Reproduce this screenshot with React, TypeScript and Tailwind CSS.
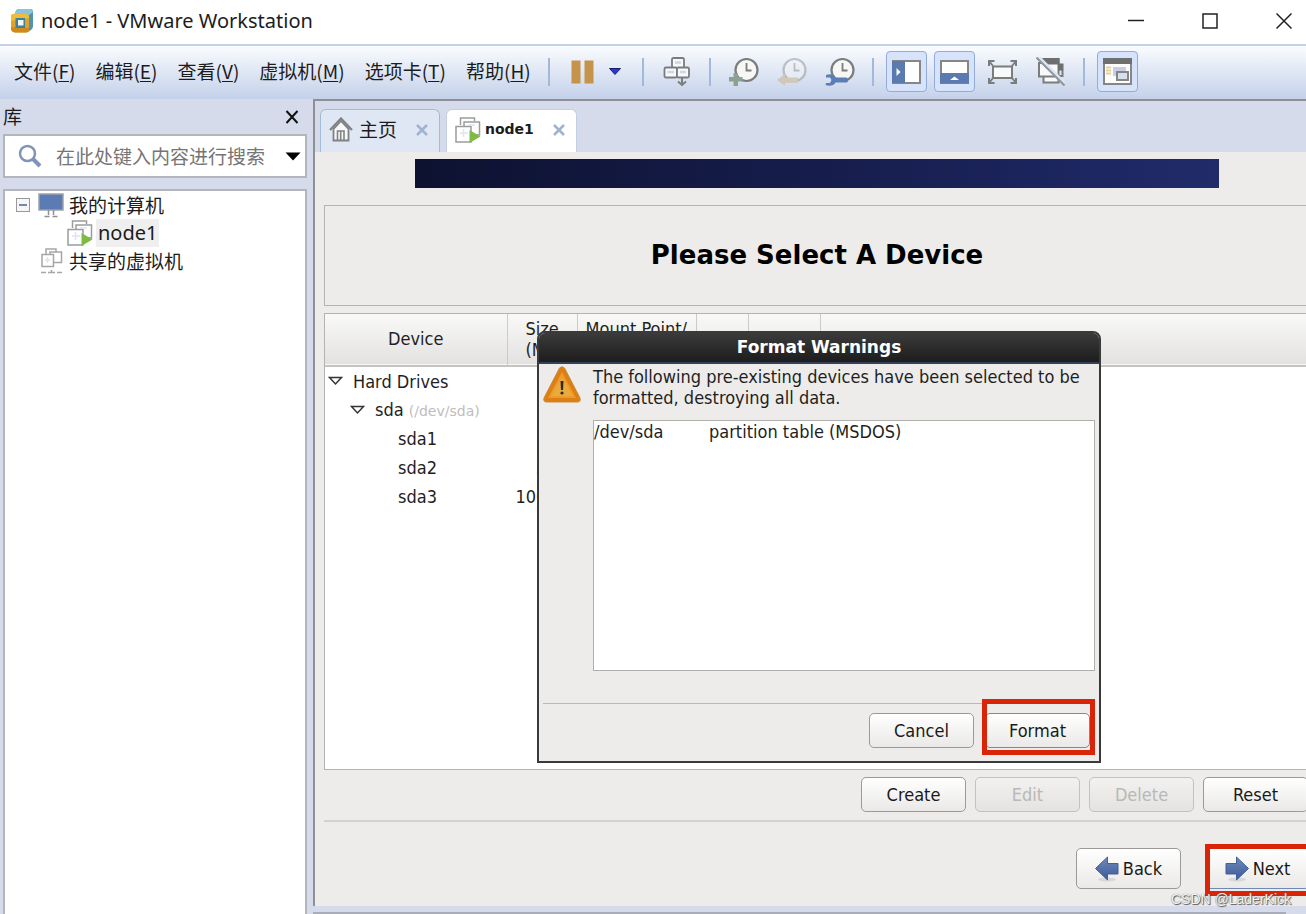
import { useState } from 'react';
import type { ReactNode } from 'react';

const MENUS = [
  { label: '文件', hotkey: 'F' },
  { label: '编辑', hotkey: 'E' },
  { label: '查看', hotkey: 'V' },
  { label: '虚拟机', hotkey: 'M' },
  { label: '选项卡', hotkey: 'T' },
  { label: '帮助', hotkey: 'H' },
];

const PARTITIONS = [
  { name: 'sda1', size: '' },
  { name: 'sda2', size: '200' },
  { name: 'sda3', size: '10000' },
];

function LogoIcon() {
  return (
    <svg width="24" height="26" viewBox="0 0 24 26" aria-hidden="true">
      <path d="M6 2.5 Q7 1 9 1 H20 Q23 1 23 4 V18 Q23 20 21.500 21.500 L18 24 L5 8 Z" fill="#4d93b4" />
      <path d="M6 2.500 Q7 1 9 1 H20 Q23 1 23 4 L19 7 H4 Z" fill="#8cc3dc" />
      <path d="M1 9 Q1 6 4 6 H16 Q19 6 19 9 V21 Q19 24.500 16 24.500 H5 Q1 24 1 20.500 Z" fill="#e0a326" />
      <path d="M1 9 Q1 6 4 6 H16 Q19 6 19 9 V10 L1 13 Z" fill="#efbd36" />
      <path d="M1 19 L19 20 V21 Q19 24.500 16 24.500 H5 Q1 24 1 20.500 Z" fill="#d08a1c" />
      <path d="M5.500 10 H15 V20 H5.500 Z" fill="#3d7f9e" />
      <path d="M8 12 H13.500 V17.500 H8 Z" fill="#f4f6f8" />
    </svg>
  );
}

function ClockFace({ faded }: { faded?: boolean }) {
  return (
    <g opacity={faded ? 0.4 : 1}>
      <circle cx="18.500" cy="13" r="11" fill="#f7f7f6" stroke="#7b7c7c" strokeWidth="2.2" />
      <path d="M18.500 6 V13.500 H23.500" fill="none" stroke="#7b7c7c" strokeWidth="1.8" />
    </g>
  );
}

function SnapshotIcon({ kind }: { kind: 'take' | 'revert' | 'manage' }) {
  return (
    <svg width="31" height="30" viewBox="0 0 31 30" aria-hidden="true">
      <ClockFace faded={kind === 'revert'} />
      {kind === 'take' && (
        <path d="M5.500 16 H10 V20 H14.500 V24.500 H10 V29 H5.500 V24.500 H1 V20 H5.500 Z" fill="#8ba293" />
      )}
      {kind === 'revert' && <path d="M1 23 L9 17 V20.500 H22 V26 H9 V29 Z" fill="#cfc8bb" />}
      {kind === 'manage' && (
        <path
          d="M2 18 C6 16.500 10 17 11.500 20.500 H22.500 Q24 20.500 24 23 Q24 25.500 22.500 25.500 H11.500 C10 29 5 29.500 1.500 28 L2 26 H6 L7.500 23 L6 20.500 H2 Z"
          fill="#5b7fb4"
        />
      )}
    </svg>
  );
}

function SendKeysIcon() {
  return (
    <svg width="28" height="30" viewBox="0 0 28 30" aria-hidden="true">
      <g fill="#f8f9fb" stroke="#7b7c7c" strokeWidth="1.800">
        <rect x="9" y="1" width="12" height="10" rx="1.500" />
        <rect x="1.500" y="10.500" width="12.500" height="10" rx="1.500" />
        <rect x="14" y="10.500" width="12" height="10" rx="1.500" />
      </g>
      <path d="M12 5.500 H18 M4.500 15 H11 M17 15 H23" stroke="#cdd6e8" strokeWidth="2.500" />
      <path d="M19 21 V28 M15 24.500 L19 28 L23 24.500" fill="none" stroke="#7b7c7c" strokeWidth="2" />
    </svg>
  );
}

function SidebarIcon() {
  return (
    <svg width="29" height="24" viewBox="0 0 29 24" aria-hidden="true">
      <rect x="1" y="1" width="27" height="22" fill="#fff" stroke="#858686" strokeWidth="2" />
      <rect x="0" y="1" width="13" height="22" fill="#5b7bb0" />
      <path d="M4.500 8 L8.500 12 L4.500 16 Z" fill="#fff" />
    </svg>
  );
}

function ThumbnailBarIcon() {
  return (
    <svg width="29" height="24" viewBox="0 0 29 24" aria-hidden="true">
      <rect x="1" y="1" width="27" height="22" fill="#fff" stroke="#858686" strokeWidth="2" />
      <rect x="0" y="13" width="29" height="10.500" fill="#5b7bb0" />
      <path d="M10 20 L14.500 16.500 L19 20 Z" fill="#fff" />
    </svg>
  );
}

function FullScreenIcon() {
  return (
    <svg width="29" height="24" viewBox="0 0 29 24" aria-hidden="true">
      <rect x="5" y="6.500" width="19" height="11.500" fill="#f8f9fb" stroke="#7b7c7c" strokeWidth="2" />
      <path
        d="M1 6 V1 H6.500 M22.500 1 H28 V6 M28 18 V23 H22.500 M6.500 23 H1 V18 M1 1 L5 6 M28 1 L24 6 M28 23 L24 18 M1 23 L5 18"
        fill="none"
        stroke="#7b7c7c"
        strokeWidth="2"
      />
    </svg>
  );
}

function UnityIcon() {
  return (
    <svg width="29" height="29" viewBox="0 0 29 29" aria-hidden="true">
      <rect x="7.500" y="2" width="15" height="23.500" fill="#f8f9fb" stroke="#7b7c7c" strokeWidth="2" />
      <rect x="6.500" y="1" width="17" height="6.500" fill="#6e6f6f" />
      <rect x="22" y="6.500" width="5.500" height="7" fill="#6e6f6f" />
      <path d="M26.500 13 V19 H20" fill="none" stroke="#7b7c7c" strokeWidth="2" />
      <path d="M3 6 H8 L21 19.500 H3 Z" fill="#f8f9fb" stroke="#7b7c7c" strokeWidth="2" />
      <path d="M2 0 L29 27" stroke="#dde5f3" strokeWidth="4" />
      <path d="M0.500 0.500 L28.500 28.500" stroke="#8f959d" strokeWidth="2" />
    </svg>
  );
}

function ConsoleViewIcon() {
  return (
    <svg width="29" height="27" viewBox="0 0 29 27" aria-hidden="true">
      <rect x="1" y="1" width="27" height="25" fill="#fdfdfc" stroke="#858686" strokeWidth="2" />
      <rect x="0" y="0" width="29" height="6" fill="#6e6f6f" />
      <path d="M3 9.500 H8 M3 12.500 H8 M3 15.500 H8" stroke="#e4cf9a" strokeWidth="2" />
      <rect x="10" y="9" width="13" height="9" fill="#c5d0e6" />
      <rect x="14" y="14" width="11" height="8" fill="#d7deec" stroke="#858686" strokeWidth="2" />
    </svg>
  );
}

function VmIcon() {
  return (
    <svg className="shrink-0" width="26" height="26" viewBox="0 0 26 26" aria-hidden="true">
      <g fill="#fff" stroke="#9b9c9c" strokeWidth="1.500">
        <path d="M5.500 8 V1 H19.500 V4" fill="none" />
        <rect x="9" y="5" width="15.500" height="13" />
        <rect x="1" y="9.500" width="15" height="15.500" />
      </g>
      <path d="M8.500 12 V20 M5 16 H13 M13 8 H20" stroke="#dfe4f1" strokeWidth="1.500" />
      <path d="M14.500 13 L25.500 19.500 L14.500 26 Z" fill="#7dbb42" />
    </svg>
  );
}

function MonitorIcon() {
  return (
    <svg width="26" height="25" viewBox="0 0 26 25" aria-hidden="true">
      <rect x="1" y="1" width="24" height="16" fill="#5b7bb4" stroke="#9da1a8" strokeWidth="1.500" />
      <path d="M10.500 17 V22 M15.500 17 V22 M6.500 23.500 H11.500 M14.500 23.500 H19.500" stroke="#8f9193" strokeWidth="1.500" />
    </svg>
  );
}

function SharedIcon() {
  return (
    <svg width="22" height="26" viewBox="0 0 22 26" aria-hidden="true">
      <g fill="#fff" stroke="#a5a6a6" strokeWidth="1.500">
        <path d="M5 6 V1 H15 V4" fill="none" />
        <rect x="9" y="4" width="11.500" height="10.500" />
        <rect x="1" y="6.500" width="11.500" height="12" />
      </g>
      <path d="M6.500 9 V15 M4 12 H9.500" stroke="#dfe4f1" strokeWidth="1.500" />
      <path d="M10.500 22 V24.500 M0 24.500 H5 M7 24.500 H14 M16 24.500 H21" stroke="#a5a6a6" strokeWidth="1.500" />
    </svg>
  );
}

function HomeIcon() {
  return (
    <svg width="24" height="25" viewBox="0 0 24 25" aria-hidden="true">
      <path d="M4.500 12 V23.500 H19.500 V12 L12 4 Z" fill="#f7f8f9" stroke="#808182" strokeWidth="1.800" />
      <path d="M1 13 L12 1.500 L23 13" fill="none" stroke="#808182" strokeWidth="2.200" />
      <path d="M8.500 23 V14 H15 V23 M11.700 14 V23" fill="none" stroke="#808182" strokeWidth="1.600" />
    </svg>
  );
}

function WarningIcon() {
  return (
    <svg className="shrink-0" width="38" height="37" viewBox="0 0 38 37" aria-hidden="true">
      <path
        d="M16.500 2 Q19 -0.500 21.500 2 L37 32 Q38 36 34.500 36 H3.500 Q0 36 1 32 Z"
        fill="#dd7f12"
        stroke="#c9883a"
      />
      <path d="M19 6 L33 32 H5 Z" fill="#ee9a2c" />
      <path d="M19 11 L30 30 H8 Z" fill="#e8ab3c" />
      <path d="M17.500 15 H20.500 L20 24 H18 Z" fill="#33291a" />
      <circle cx="19" cy="27" r="1.600" fill="#33291a" />
    </svg>
  );
}

function ArrowIcon({ flip }: { flip?: boolean }) {
  return (
    <svg width="24" height="26" viewBox="0 0 24 26" aria-hidden="true">
      <defs>
        <linearGradient id="arrow" x1="0" y1="0" x2="0" y2="1">
          <stop offset="0" stopColor="#7189bb" />
          <stop offset="1" stopColor="#3b5998" />
        </linearGradient>
      </defs>
      <ellipse cx="12" cy="23.500" rx="9" ry="2" fill="#d8d8d8" />
      <path
        d="M1 7.500 H11.500 V1 L23.500 12.500 L11.500 24 V18 H1 Z"
        fill="url(#arrow)"
        stroke="#3f5f9f"
        transform={flip ? 'translate(24 0) scale(-1 1)' : undefined}
      />
    </svg>
  );
}

function Expander() {
  return (
    <svg className="shrink-0" width="15" height="10" viewBox="0 0 15 10" aria-hidden="true">
      <path d="M1.500 1.500 H13.500 L7.500 8 Z" fill="#fff" stroke="#333" strokeWidth="1.500" />
    </svg>
  );
}

function CrossIcon() {
  return (
    <svg width="12" height="12" viewBox="0 0 12 12" aria-hidden="true">
      <path d="M1 1 L11 11 M11 1 L1 11" stroke="#9fb3cf" strokeWidth="2.500" />
    </svg>
  );
}

function Divider() {
  return <span className="mx-3 h-7 w-0.5 shrink-0 bg-[#a3b9dc]" />;
}

function ToolButton({ label, active, children }: { label: string; active?: boolean; children: ReactNode }) {
  return (
    <button
      type="button"
      aria-label={label}
      aria-pressed={active}
      className={`flex size-[41px] shrink-0 items-center justify-center rounded-[4px] ${
        active ? 'border border-[#92abd8] bg-[#d6e3fa]' : ''
      }`}
    >
      {children}
    </button>
  );
}

function GtkButton({ children, disabled, focused }: { children: ReactNode; disabled?: boolean; focused?: boolean }) {
  const tone = disabled
    ? 'border-[#c3c2c0] bg-linear-to-b from-[#f2f1f0] to-[#e4e3e1] text-[#b9b8b6]'
    : focused
      ? 'border-[#7089b8] bg-linear-to-b from-white to-[#eae9e7] text-[#1a1a1a]'
      : 'border-[#9b9a98] bg-linear-to-b from-white to-[#eae9e7] text-[#1a1a1a]';
  return (
    <button
      type="button"
      disabled={disabled}
      className={`flex h-full w-[105px] items-center justify-center gap-1 rounded-[5px] border ${tone}`}
    >
      {children}
    </button>
  );
}

function TitleBar() {
  return (
    <header className="flex h-11 shrink-0 items-center bg-white pr-3.5 pb-0.5 pl-2.5">
      <LogoIcon />
      <h1 className="ml-[7px] flex-1 font-['Noto_Sans'] text-[20px] text-[#1c1c1c]">node1 - VMware Workstation</h1>
      <div className="flex gap-[58px]">
        <button type="button" aria-label="最小化" className="size-4">
          <svg width="16" height="16" viewBox="0 0 16 16"><path d="M0 7.500 H16" stroke="#222" strokeWidth="1.500" /></svg>
        </button>
        <button type="button" aria-label="最大化" className="size-4">
          <svg width="16" height="16" viewBox="0 0 16 16"><rect x="1" y="1" width="14" height="14" fill="none" stroke="#222" strokeWidth="1.500" /></svg>
        </button>
        <button type="button" aria-label="关闭" className="size-4">
          <svg width="16" height="16" viewBox="0 0 16 16"><path d="M0.500 0.500 L15.500 15.500 M15.500 0.500 L0.500 15.500" stroke="#222" strokeWidth="1.500" /></svg>
        </button>
      </div>
    </header>
  );
}

function Toolbar() {
  return (
    <div className="flex h-[55px] shrink-0 items-center border-t-2 border-[#c3d2e8] bg-linear-to-b from-[#fafcfe] to-[#c4d1ea] pb-0.5">
      <nav className="flex w-[536px] shrink-0 gap-5 pl-3.5 text-[19px] text-[#1c1c1c]">
        {MENUS.map((menu) => (
          <button key={menu.hotkey} type="button" className="whitespace-nowrap">
            {menu.label}(<span className="underline underline-offset-2">{menu.hotkey}</span>)
          </button>
        ))}
      </nav>
      <Divider />
      <ToolButton label="挂起">
        <svg width="24" height="24" viewBox="0 0 24 24"><path d="M0.500 0.500 H9.500 V23.500 H0.500 Z M13.500 0.500 H22.500 V23.500 H13.500 Z" fill="#c6934a" /></svg>
      </ToolButton>
      <button type="button" aria-label="电源选项" className="flex h-10 w-[27px] shrink-0 items-center pl-1.5">
        <svg width="12" height="7" viewBox="0 0 12 7"><path d="M0.500 0.500 H11.500 L6 6.500 Z" fill="#2a35d8" stroke="#18206e" /></svg>
      </button>
      <Divider />
      <ToolButton label="发送 Ctrl+Alt+Del"><SendKeysIcon /></ToolButton>
      <Divider />
      <div className="flex gap-[7px]">
        <ToolButton label="拍摄快照"><SnapshotIcon kind="take" /></ToolButton>
        <ToolButton label="恢复快照"><SnapshotIcon kind="revert" /></ToolButton>
        <ToolButton label="管理快照"><SnapshotIcon kind="manage" /></ToolButton>
      </div>
      <Divider />
      <div className="flex gap-[7px]">
        <ToolButton label="显示库" active><SidebarIcon /></ToolButton>
        <ToolButton label="显示缩略图" active><ThumbnailBarIcon /></ToolButton>
        <ToolButton label="全屏"><FullScreenIcon /></ToolButton>
        <ToolButton label="Unity"><UnityIcon /></ToolButton>
      </div>
      <Divider />
      <ToolButton label="控制台视图" active><ConsoleViewIcon /></ToolButton>
    </div>
  );
}

function Library() {
  const [query, setQuery] = useState('');
  return (
    <aside className="flex w-[313px] shrink-0 flex-col bg-[#d6dbec] pr-1.5 pl-[3px] text-[19px] text-[#1c1c1c]">
      <div className="flex h-[35px] items-center justify-between pr-2">
        <h2>库</h2>
        <button type="button" aria-label="关闭库">
          <svg width="14" height="14" viewBox="0 0 14 14"><path d="M1.500 1 L12.500 13 M12.500 1 L1.500 13" stroke="#111" strokeWidth="2" /></svg>
        </button>
      </div>
      <div className="flex h-11 items-center border-2 border-[#b3b5bc] bg-white pr-1 pl-[13px]">
        <svg width="24" height="24" viewBox="0 0 24 24" aria-hidden="true">
          <circle cx="9.500" cy="9.500" r="7.500" fill="none" stroke="#8093bb" strokeWidth="2.500" />
          <path d="M15 15 L22 22" stroke="#8093bb" strokeWidth="4" />
        </svg>
        <input
          type="text"
          aria-label="搜索库"
          value={query}
          onChange={(e) => setQuery(e.target.value)}
          placeholder="在此处键入内容进行搜索"
          className="ml-3.5 min-w-0 flex-1 outline-none placeholder:text-[#757575]"
        />
        <button type="button" aria-label="搜索选项">
          <svg width="16" height="9" viewBox="0 0 16 9"><path d="M0.500 0.500 H15.500 L8 8.500 Z" fill="#000" /></svg>
        </button>
      </div>
      <ul className="mt-[11px] flex-1 border-2 border-b-0 border-[#b3b5bc] bg-white leading-7">
        <li>
          <div className="flex h-7 items-center pl-[11px]">
            <button type="button" aria-label="折叠" className="mr-2">
              <svg width="14" height="14" viewBox="0 0 14 14"><rect x="0.500" y="0.500" width="13" height="13" fill="#f6f6f6" stroke="#999" /><path d="M3 7 H11" stroke="#4a5fa0" strokeWidth="1.500" /></svg>
            </button>
            <MonitorIcon />
            <span className="ml-[5px]">我的计算机</span>
          </div>
          <ul>
            <li className="flex h-7 items-center pl-[62px]">
              <VmIcon />
              <span className="ml-[3px] bg-[#efefef] px-0.5 font-['Noto_Sans'] text-[20px]">node1</span>
            </li>
          </ul>
        </li>
        <li className="flex h-7 items-center pl-9">
          <SharedIcon />
          <span className="ml-1.5">共享的虚拟机</span>
        </li>
      </ul>
    </aside>
  );
}

function Tabs() {
  return (
    <div className="flex h-[51px] shrink-0 items-end gap-1.5 bg-[#d6dbec] pl-[5px] text-[19px] text-[#1c1c1c]">
      <div className="flex h-[43px] w-[120px] items-center rounded-t-md border border-b-0 border-[#a5bad8] bg-[#dfe7f5] px-2 pb-[3px]">
        <HomeIcon />
        <button type="button" className="ml-1.5 flex-1 text-left">主页</button>
        <button type="button" aria-label="关闭主页" className="mr-[3px]"><CrossIcon /></button>
      </div>
      <div className="flex h-[43px] w-[131px] items-center rounded-t-md border border-b-0 border-[#c3cfe4] bg-white px-2 pb-[3px]">
        <VmIcon />
        <button type="button" className="ml-1 flex-1 text-left font-['DejaVu_Sans'] text-[14px] font-bold">node1</button>
        <button type="button" aria-label="关闭 node1" className="mr-[3px]"><CrossIcon /></button>
      </div>
    </div>
  );
}

function DeviceTable() {
  return (
    <table className="w-full table-fixed border-collapse">
      <colgroup>
        <col className="w-[182px]" />
        <col className="w-[70px]" />
        <col className="w-[119px]" />
        <col className="w-[52px]" />
        <col className="w-[72px]" />
        <col />
      </colgroup>
      <thead>
        <tr className="h-[52px] border-b-2 border-[#c4c3c1] bg-linear-to-b from-[#f9f9f8] to-[#e3e2e0] leading-[21px] whitespace-nowrap">
          <th className="border-r border-[#cccbc9] pb-0.5 font-normal">Device</th>
          <th className="border-r border-[#cccbc9] pb-0.5 pl-[18px] text-left font-normal">Size<br />(MB)</th>
          <th className="border-r border-[#cccbc9] pb-0.5 pl-2 text-left font-normal">Mount Point/<br />RAID</th>
          <th className="border-r border-[#cccbc9]" />
          <th className="border-r border-[#cccbc9]" />
          <th />
        </tr>
      </thead>
      <tbody>
        <tr className="h-[29px]">
          <td className="pl-[3px]">
            <span className="flex items-center gap-2.5"><Expander />Hard Drives</span>
          </td>
        </tr>
        <tr className="h-[29px]">
          <td className="pl-[25px]">
            <span className="flex items-center gap-2.5 whitespace-nowrap">
              <Expander />
              <span>sda <small className="font-['DejaVu_Sans'] text-[14px] text-[#bdbdbd]">(/dev/sda)</small></span>
            </span>
          </td>
        </tr>
        {PARTITIONS.map((part) => (
          <tr key={part.name} className="h-[29px]">
            <td className="pl-[73px]">{part.name}</td>
            <td className="pr-2.5 text-right">{part.size}</td>
          </tr>
        ))}
      </tbody>
    </table>
  );
}

function FormatDialog() {
  return (
    <div
      role="dialog"
      aria-labelledby="format-title"
      className="absolute top-[17px] left-[212px] flex h-[432px] w-[564px] flex-col rounded-t-lg border-2 border-[#3a3a3a] bg-[#edeceb]"
    >
      <h3
        id="format-title"
        className="flex h-[31px] shrink-0 items-center justify-center rounded-t-md border-b-2 border-[#35415a] bg-linear-to-b from-[#3a3b3a] to-[#1d1d1d] font-['DejaVu_Sans'] text-[17px] font-bold text-white"
      >
        Format Warnings
      </h3>
      <div className="flex flex-1 gap-3 px-1 pt-0.5">
        <WarningIcon />
        <div className="flex flex-1 flex-col">
          <p className="leading-[21px] whitespace-nowrap">
            The following pre-existing devices have been selected to be
            <br />
            formatted, destroying all data.
          </p>
          <table className="mt-3 block h-[251px] border border-[#b0afac] bg-white leading-[21px]">
            <tbody>
              <tr>
                <td className="w-[115px]">/dev/sda</td>
                <td>partition table (MSDOS)</td>
              </tr>
            </tbody>
          </table>
        </div>
      </div>
      <div className="mx-1 flex justify-end gap-[11px] border-t border-[#b9b8b5] pt-[9px] pr-[5px] pb-[13px]">
        <div className="h-[35px]"><GtkButton>Cancel</GtkButton></div>
        <div className="relative h-[35px]">
          <GtkButton focused>Format</GtkButton>
          <span className="pointer-events-none absolute -top-3.5 -right-[5px] -bottom-[7px] -left-[3px] border-[5px] border-[#d92408]" />
        </div>
      </div>
    </div>
  );
}

function Installer() {
  return (
    <main className="flex min-h-0 flex-1 flex-col overflow-hidden bg-[#edeceb] pt-[7px] pb-[17px] font-['DejaVu_Sans_Condensed','DejaVu_Sans'] text-[18px] text-[#1f1f1f]">
      <div className="mr-[87px] ml-[100px] h-[29px] shrink-0 bg-linear-to-r from-[#0d1230] via-[#161d4c] to-[#202b6a]" />
      {/* the guest screen is a bit wider than the view, so its right edge runs off */}
      <div className="mt-[17px] -mr-1 ml-[9px] flex min-h-0 flex-1 flex-col">
        <div className="flex h-[101px] shrink-0 items-center justify-center border border-[#b4b3b1]">
          <h2 className="font-['DejaVu_Sans'] text-[26px] font-bold text-black">Please Select A Device</h2>
        </div>
        <div className="relative mt-[7px] flex-1 border border-[#b4b3b1] bg-white">
          <DeviceTable />
          <FormatDialog />
        </div>
        <div className="flex justify-end gap-[9px] border-b-2 border-[#d3d2d0] pt-[7px] pb-2 pr-0.5">
          <div className="h-[35px]"><GtkButton>Create</GtkButton></div>
          <div className="h-[35px]"><GtkButton disabled>Edit</GtkButton></div>
          <div className="h-[35px]"><GtkButton disabled>Delete</GtkButton></div>
          <div className="h-[35px]"><GtkButton>Reset</GtkButton></div>
        </div>
        <div className="mt-[26px] flex justify-end gap-6">
          <div className="h-[41px]"><GtkButton><ArrowIcon flip />Back</GtkButton></div>
          <div className="relative h-[41px]">
            <GtkButton focused><ArrowIcon />Next</GtkButton>
            <span className="pointer-events-none absolute -top-1 -right-3 -bottom-[7px] left-0 border-[5px] border-[#d92408]" />
          </div>
        </div>
      </div>
    </main>
  );
}

export default function App() {
  return (
    <div className="relative flex h-screen flex-col overflow-hidden bg-[#d6dbec] font-['Noto_Sans_CJK_SC',sans-serif]">
      <TitleBar />
      <Toolbar />
      <div className="flex min-h-0 flex-1">
        <Library />
        <div className="flex min-w-0 flex-1 flex-col">
          <div className="flex min-h-0 flex-1 flex-col border-t-2 border-l-2 border-[#8f9095]">
            <Tabs />
            <Installer />
          </div>
          <div className="mt-1.5 mr-5 h-0.5 shrink-0 bg-[#a9adba]" />
        </div>
      </div>
      <span className="absolute right-[15px] bottom-1 font-['Liberation_Sans'] text-[14px] text-[#f4f4f4] [text-shadow:1px_1px_1px_#555,0_0_1px_#666]">
        CSDN @LaderKick
      </span>
    </div>
  );
}
